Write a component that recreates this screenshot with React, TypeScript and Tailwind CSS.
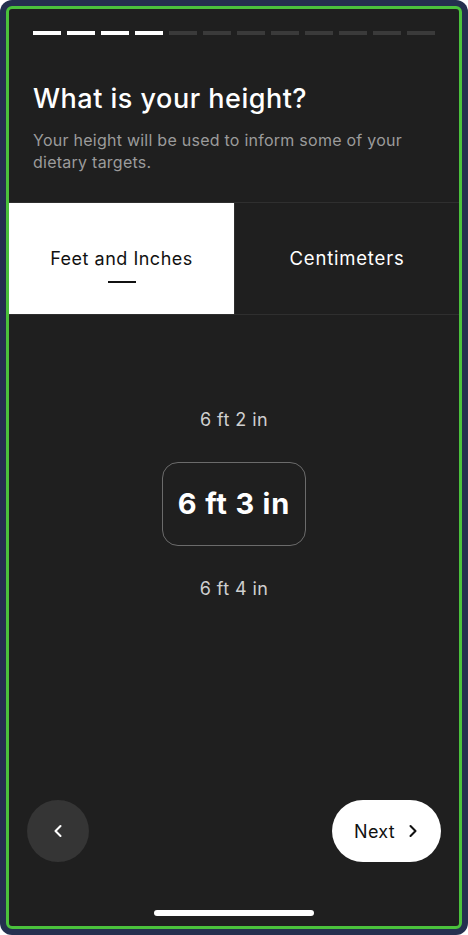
import { ChevronLeft, ChevronRight } from "lucide-react";

const steps = Array.from({ length: 12 }, (_, i) => i < 4);

export default function App() {
  return (
    <div
      className="h-[935px] w-[468px] rounded-[12px] bg-[#25304f] p-[6px]"
      style={{ fontFamily: "Inter, 'Noto Sans', sans-serif" }}
    >
      <div className="flex h-full flex-col overflow-hidden rounded-[6px] border-[3px] border-[#4bc23c] bg-[#1f1f1f]">
        {/* progress */}
        <div className="flex gap-[6px] px-[24px] pt-[22px]">
          {steps.map((on, i) => (
            <div key={i} className={`h-[4px] w-[28px] ${on ? "bg-white" : "bg-[#3a3a3a]"}`} />
          ))}
        </div>

        <h1 className="mt-[48px] px-[24px] text-[27px] leading-[32px] font-medium tracking-[0.5px] text-white">
          What is your height?
        </h1>
        <p className="mt-[14px] pr-[40px] pl-[24px] text-[16px] leading-[22px] tracking-[0.25px] text-[#9b9b9b]">
          Your height will be used to inform some of your dietary targets.
        </p>

        {/* unit tabs */}
        <div className="mt-[29px] grid h-[113px] grid-cols-2 border-y border-[#2f2f2f]">
          <button className="flex flex-col items-center justify-center bg-white text-[18px] tracking-[0.5px] text-[#111]">
            <span className="mt-[12px] leading-[24px]">Feet and Inches</span>
            <span className="mt-[10px] h-[2px] w-[28px] bg-[#111]" />
          </button>
          <button className="flex items-center justify-center border-l border-[#2f2f2f] text-[18.5px] tracking-[0.8px] text-white">
            <span className="mb-[1px] leading-[24px]">Centimeters</span>
          </button>
        </div>

        {/* picker */}
        <div className="mt-[93px] flex flex-col items-center">
          <span className="text-[18px] leading-[24px] tracking-[0.4px] text-[#cfcfcf]">6 ft 2 in</span>
          <div className="mt-[30px] flex h-[84px] w-[144px] items-center justify-center rounded-[16px] border border-[#6b6b6b]">
            <span className="text-[29px] font-bold tracking-[0.8px] text-white">6 ft 3 in</span>
          </div>
          <span className="mt-[31px] text-[18px] leading-[24px] tracking-[0.4px] text-[#cfcfcf]">6 ft 4 in</span>
        </div>

        <div className="flex-1" />

        {/* nav */}
        <div className="flex items-center justify-between px-[18px]">
          <button className="flex h-[62px] w-[62px] items-center justify-center rounded-full bg-[#353535] text-white">
            <ChevronLeft size={20} strokeWidth={2.5} />
          </button>
          <button className="flex h-[62px] w-[109px] items-center justify-center gap-[8px] rounded-full bg-white pl-[4px] text-[18px] tracking-[0.3px] text-[#111]">
            <span>Next</span>
            <ChevronRight size={20} strokeWidth={2.5} />
          </button>
        </div>

        <div className="mt-[48px] mb-[10px] flex justify-center">
          <div className="h-[6px] w-[160px] rounded-full bg-white" />
        </div>
      </div>
    </div>
  );
}
